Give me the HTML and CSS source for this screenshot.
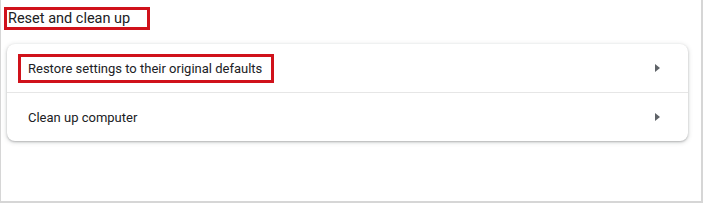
FILE: index.html
```html
<!DOCTYPE html>
<html lang="en">
<head>
  <meta charset="UTF-8">
  <title>Reset and clean up</title>
  <link rel="stylesheet" href="styles.css">
</head>
<body>
  <div class="frame">
    <h2 class="section-title"><span class="mark">Reset and clean up</span></h2>
    <div class="card">
      <div class="row">
        <span class="mark row-label">Restore settings to their original defaults</span>
        <span class="arrow"></span>
      </div>
      <div class="row">
        <span class="row-label">Clean up computer</span>
        <span class="arrow"></span>
      </div>
    </div>
  </div>
</body>
</html>
```

FILE: styles.css
```css
body {
  margin: 0;
  font-family: Roboto, "Liberation Sans", Arial, sans-serif;
  background-color: #fff;
  color: #202124;
}

.frame {
  box-sizing: border-box;
  width: 703px;
  height: 203px;
  border-left: 1px solid #d6d6d6;
  border-right: 2px solid #d6d6d6;
  border-bottom: 2px solid #d6d6d6;
  padding: 7px 13px 0 3px;
}

.section-title {
  margin: 0 0 14px 0;
  font-size: 14.5px;
  font-weight: 400;
  line-height: 17px;
}

.section-title .mark {
  display: inline-block;
  padding: 0 17px 0 1px;
}

.mark {
  border: 3px solid #d0121b;
  line-height: 17px;
}

.card {
  margin-left: 3px;
  background: #fff;
  border-radius: 8px;
  box-shadow: 0 1px 2px rgba(60, 64, 67, 0.3), 0 1px 4px 1px rgba(60, 64, 67, 0.15);
}

.row {
  height: 48px;
  display: flex;
  align-items: center;
  justify-content: space-between;
  padding: 0 28px 0 21px;
  font-size: 13px;
}

.row + .row {
  border-top: 1px solid #e6e6e6;
}

.row .mark {
  margin-left: -10px;
  padding: 3px 9px 3px 7px;
}

.arrow {
  width: 0;
  height: 0;
  border-top: 4px solid transparent;
  border-bottom: 4px solid transparent;
  border-left: 5px solid #5f6368;
}
```
